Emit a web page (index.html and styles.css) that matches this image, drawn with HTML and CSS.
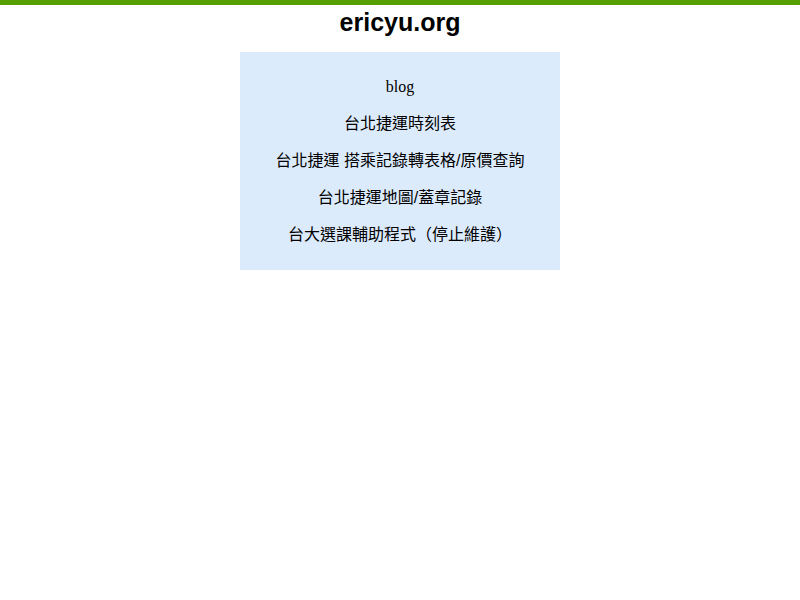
FILE: index.html
```html
<!DOCTYPE html>
<html lang="zh-Hant">
<head>
<meta charset="utf-8">
<title>ericyu.org</title>
<link rel="stylesheet" href="styles.css">
</head>
<body>
<header class="site-header">
  <h1 class="site-title">ericyu.org</h1>
</header>
<main class="menu">
  <a class="menu-item serif" href="#">blog</a>
  <a class="menu-item" href="#">台北捷運時刻表</a>
  <a class="menu-item" href="#">台北捷運 搭乘記錄轉表格/原價查詢</a>
  <a class="menu-item" href="#">台北捷運地圖/蓋章記錄</a>
  <a class="menu-item" href="#">台大選課輔助程式（停止維護）</a>
</main>
</body>
</html>
```
FILE: styles.css
```css
html, body {
  margin: 0;
  padding: 0;
  background: #ffffff;
}
body {
  border-top: 5px solid #55a000;
  font-family: "Liberation Sans", "Noto Sans CJK TC", sans-serif;
  color: #000;
}
.site-header {
  height: 47px;
  box-sizing: border-box;
  padding-top: 2px;
}
.site-title {
  margin: 0;
  text-align: center;
  font-family: "Liberation Sans", Arial, sans-serif;
  font-weight: bold;
  font-size: 25px;
  line-height: 30px;
}
.menu {
  width: 320px;
  margin: 0 auto;
  background: #dcebfc;
  padding: 16px 0 17px;
  display: flex;
  flex-direction: column;
  align-items: center;
}
.menu-item {
  display: block;
  height: 37px;
  line-height: 37px;
  font-size: 16px;
  color: #000;
  text-decoration: none;
  font-family: "Liberation Sans", "Noto Sans CJK TC", sans-serif;
  white-space: nowrap;
}
.menu-item.serif {
  font-family: "Liberation Serif", "Noto Sans CJK TC", serif;
}
```
